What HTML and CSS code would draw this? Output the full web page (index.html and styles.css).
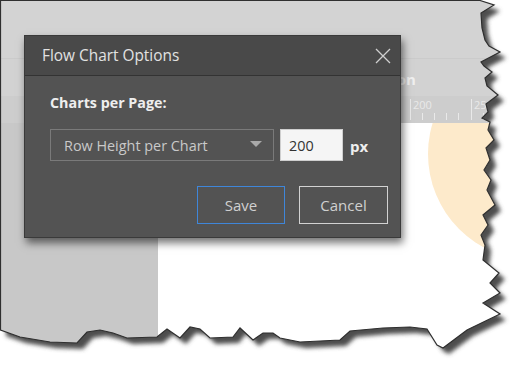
FILE: index.html
```html
<!DOCTYPE html>
<html>
<head>
<meta charset="utf-8">
<link rel="stylesheet" href="styles.css">
</head>
<body>
<div class="sheet">
  <svg class="sheet-shadow" width="525" height="370" viewBox="0 0 525 370">
    <defs>
      <filter id="blur" x="-10%" y="-10%" width="120%" height="120%"><feGaussianBlur stdDeviation="2.2"/></filter>
    </defs>
    <polygon filter="url(#blur)" transform="translate(6 6)" fill="#4d4d4d" points="0,0 480,0 494,5 481,13 482,28 485,40 489,46 500,52 481,62 484,66 492,72 485,78 487,86 498,95 486,104 488,112 482,118 490,122 488,130 494,140 486,148 490,160 484,170 491,180 487,190 495,205 483,215 488,225 481,235 485,245 483,260 499,273 490,283 500,293 483,303 500,314 467,330 443,348 437,345 427,329 410,327 383,328 350,331 340,340 300,342 280,338 273,333 263,333 253,340 240,328 233,337 210,338 200,329 190,327 180,338 167,329 157,337 127,338 113,333 100,330 87,332 77,343 50,342 20,337 0,330"/>
  </svg>

  <div class="page">
    <div class="toolbar"></div>
    <div class="header"><span class="header-title">Position</span></div>
    <div class="ruler">
      <svg class="ruler-svg" width="525" height="26" viewBox="0 0 525 26">
        <g stroke="#e9e9e9" stroke-width="1">
          <line x1="410.5" y1="3" x2="410.5" y2="24"/>
          <line x1="422.5" y1="17" x2="422.5" y2="24"/>
          <line x1="434.5" y1="17" x2="434.5" y2="24"/>
          <line x1="446.5" y1="17" x2="446.5" y2="24"/>
          <line x1="458.5" y1="17" x2="458.5" y2="24"/>
          <line x1="471.5" y1="3" x2="471.5" y2="24"/>
          <line x1="483.5" y1="17" x2="483.5" y2="24"/>
        </g>
        <text x="413" y="13" class="ruler-num">200</text>
        <text x="474" y="13" class="ruler-num">250</text>
      </svg>
    </div>
    <div class="workspace">
      <div class="side-panel"></div>
      <div class="canvas"><div class="blob"></div></div>
    </div>

    <div class="dialog">
      <div class="dialog-head">
        <span class="dialog-title">Flow Chart Options</span>
        <svg class="close-icon" width="16" height="16" viewBox="0 0 16 16">
          <path d="M1 1 L15 15 M15 1 L1 15" stroke="#cfcfcf" stroke-width="1.3" fill="none"/>
        </svg>
      </div>
      <div class="dialog-body">
        <div class="field-label">Charts per Page:</div>
        <div class="field-row">
          <div class="select">
            <span class="select-text">Row Height per Chart</span>
            <svg class="caret" width="12" height="6" viewBox="0 0 12 6"><polygon points="0,0 12,0 6,6" fill="#a9a9a9"/></svg>
          </div>
          <div class="num-input">200</div>
          <span class="unit">px</span>
        </div>
        <div class="actions">
          <div class="btn btn-primary">Save</div>
          <div class="btn">Cancel</div>
        </div>
      </div>
    </div>
  </div>

  <svg class="sheet-outline" width="525" height="370" viewBox="0 0 525 370">
    <polygon fill="none" stroke="#2f2f2f" stroke-width="1.2" points="0.5,0.5 480,0.5 494,5 481,13 482,28 485,40 489,46 500,52 481,62 484,66 492,72 485,78 487,86 498,95 486,104 488,112 482,118 490,122 488,130 494,140 486,148 490,160 484,170 491,180 487,190 495,205 483,215 488,225 481,235 485,245 483,260 499,273 490,283 500,293 483,303 500,314 467,330 443,348 437,345 427,329 410,327 383,328 350,331 340,340 300,342 280,338 273,333 263,333 253,340 240,328 233,337 210,338 200,329 190,327 180,338 167,329 157,337 127,338 113,333 100,330 87,332 77,343 50,342 20,337 0.5,330"/>
  </svg>
</div>
</body>
</html>
```

FILE: styles.css
```css
* { box-sizing: border-box; }
html, body { margin: 0; padding: 0; background: #ffffff; }
body { font-family: "Open Sans", "Noto Sans", sans-serif; }

.sheet {
  position: relative;
  width: 525px;
  height: 370px;
  overflow: hidden;
}

.sheet-shadow, .sheet-outline {
  position: absolute;
  left: 0;
  top: 0;
}

.page {
  position: relative;
  width: 525px;
  height: 370px;
  display: flex;
  flex-direction: column;
  clip-path: polygon(0 0, 480px 0, 494px 5px, 481px 13px, 482px 28px, 485px 40px, 489px 46px, 500px 52px, 481px 62px, 484px 66px, 492px 72px, 485px 78px, 487px 86px, 498px 95px, 486px 104px, 488px 112px, 482px 118px, 490px 122px, 488px 130px, 494px 140px, 486px 148px, 490px 160px, 484px 170px, 491px 180px, 487px 190px, 495px 205px, 483px 215px, 488px 225px, 481px 235px, 485px 245px, 483px 260px, 499px 273px, 490px 283px, 500px 293px, 483px 303px, 500px 314px, 467px 330px, 443px 348px, 437px 345px, 427px 329px, 410px 327px, 383px 328px, 350px 331px, 340px 340px, 300px 342px, 280px 338px, 273px 333px, 263px 333px, 253px 340px, 240px 328px, 233px 337px, 210px 338px, 200px 329px, 190px 327px, 180px 338px, 167px 329px, 157px 337px, 127px 338px, 113px 333px, 100px 330px, 87px 332px, 77px 343px, 50px 342px, 20px 337px, 0 330px);
}

.toolbar {
  height: 59px;
  background: #d3d3d3;
  border-bottom: 1px solid #cbcbcb;
  flex: none;
}

.header {
  height: 37px;
  background: #d2d2d2;
  flex: none;
  display: flex;
  align-items: center;
  padding-left: 355px;
}

.header-title {
  font-weight: 700;
  font-size: 15px;
  color: #f0f0f0;
  margin-top: 3px;
}

.ruler {
  height: 27px;
  background: #cdcdcd;
  flex: none;
}

.ruler-svg { display: block; }

.ruler-num {
  font-family: "Open Sans", sans-serif;
  font-size: 11px;
  fill: #e9e9e9;
}

.workspace {
  flex: 1;
  display: flex;
}

.side-panel {
  width: 158px;
  background: #c8c8c8;
  flex: none;
}

.canvas {
  flex: 1;
  background: #ffffff;
  position: relative;
  overflow: hidden;
}

.blob {
  position: absolute;
  left: 270px;
  top: -75px;
  width: 212px;
  height: 212px;
  border-radius: 50%;
  background: #fdeacb;
}

/* Dialog */
.dialog {
  position: absolute;
  left: 24px;
  top: 35px;
  width: 377px;
  height: 203px;
  background: #535353;
  border: 1px solid #3a3a3a;
  box-shadow: 2px 5px 8px rgba(0, 0, 0, 0.55);
  display: flex;
  flex-direction: column;
}

.dialog-head {
  height: 40px;
  background: #494949;
  border-bottom: 1px solid #333333;
  display: flex;
  align-items: center;
  justify-content: space-between;
  padding: 0 9px 0 17px;
  flex: none;
}

.dialog-title {
  font-size: 15.4px;
  color: #e2e2e2;
}

.close-icon { display: block; }

.dialog-body {
  padding: 17px 12px 12px 25px;
  display: flex;
  flex-direction: column;
}

.field-label {
  font-size: 14.3px;
  font-weight: 700;
  color: #eeeeee;
  line-height: 19px;
}

.field-row {
  margin-top: 17px;
  display: flex;
  align-items: center;
  height: 32px;
}

.select {
  width: 224px;
  height: 32px;
  border: 1px solid #7a7a7a;
  display: flex;
  align-items: center;
  justify-content: space-between;
  padding: 0 11px 0 13px;
}

.select-text {
  font-size: 14.4px;
  color: #c9c9c9;
}

.caret { display: block; margin-top: -3px; }

.num-input {
  width: 63px;
  height: 32px;
  margin-left: 6px;
  background: #f5f5f5;
  border: 1px solid #cfcfcf;
  font-size: 14.4px;
  color: #333333;
  display: flex;
  align-items: center;
  padding-left: 8px;
}

.unit {
  margin-left: 7px;
  font-size: 15px;
  font-weight: 700;
  color: #eeeeee;
  margin-top: 2px;
}

.actions {
  margin-top: 25px;
  display: flex;
  justify-content: flex-end;
  gap: 14px;
}

.btn {
  width: 89px;
  height: 38px;
  border: 1px solid #d2d2d2;
  display: flex;
  align-items: center;
  justify-content: center;
  font-size: 15px;
  color: #d0d0d0;
}

.btn-primary {
  width: 88px;
  border-color: #3f86d9;
}
```
